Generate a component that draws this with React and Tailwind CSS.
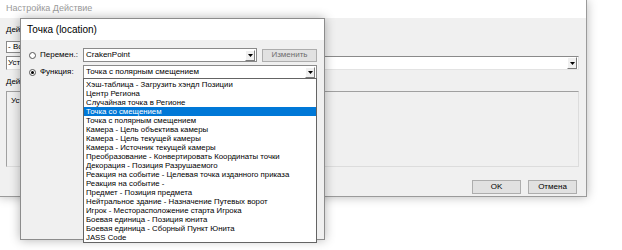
import React from "react";

const items = [
  "Хэш-таблица - Загрузить хэндл Позиции",
  "Центр Региона",
  "Случайная точка в Регионе",
  "Точка со смещением",
  "Точка с полярным смещением",
  "Камера - Цель объектива камеры",
  "Камера - Цель текущей камеры",
  "Камера - Источник текущей камеры",
  "Преобразование - Конвертировать Координаты точки",
  "Декорация - Позиция Разрушаемого",
  "Реакция на событие - Целевая точка изданного приказа",
  "Реакция на событие -",
  "Предмет - Позиция предмета",
  "Нейтральное здание - Назначение Путевых ворот",
  "Игрок - Месторасположение старта Игрока",
  "Боевая единица - Позиция юнита",
  "Боевая единица - Сборный Пункт Юнита",
  "JASS Code",
];

function Arrow() {
  return (
    <svg width="5" height="3" viewBox="0 0 5 3">
      <path d="M0 0h5L2.5 3z" fill="#000" />
    </svg>
  );
}

function DropBtn() {
  return (
    <div className="flex h-full w-[10px] items-center justify-center border border-t-white border-l-white border-r-[#7a7a7a] border-b-[#7a7a7a] bg-[#f0f0f0]">
      <Arrow />
    </div>
  );
}

function Radio({ on }) {
  return (
    <div className="flex w-[11px] items-center">
      <div className="flex h-[7px] w-[7px] items-center justify-center rounded-full border border-[#555] bg-white">
        {on && <div className="h-[3px] w-[3px] rounded-full bg-black" />}
      </div>
    </div>
  );
}

export default function App() {
  const font = { fontFamily: '"Liberation Sans", Arial, sans-serif' };
  return (
    <div className="relative h-[250px] w-[622px] overflow-hidden bg-white text-[8px] text-black" style={font}>
      {/* background window */}
      <div className="absolute left-[-1px] top-0 flex h-[197px] w-[588px] flex-col border-r border-b border-[#9a9a9a] bg-[#f0f0f0] shadow-[0_0_10px_rgba(0,0,0,0.28)]">
        <div className="flex h-[18px] items-center bg-white pl-[7px] text-[9px] text-[#9a9a9a]">Настройка Действие</div>
        <div className="flex flex-col pl-[7px] pr-[7px]">
          <div className="mt-[7px] flex h-[10px] items-center">Дей</div>
          <div className="mt-[6px] flex h-[12px] w-[220px] items-center border border-[#8a8a8a] bg-white pl-[1px]">- Все</div>
          <div className="mt-[3px] flex h-[14px] items-center justify-between border border-t-[#8a8a8a] border-l-[#8a8a8a] border-r-[#e3e3e3] border-b-[#e3e3e3] bg-white pl-[1px] pr-[1px]">
            <span>Установить</span>
            <div className="h-[12px]"><DropBtn /></div>
          </div>
          <div className="mt-[7px] flex h-[10px] items-center">Дей</div>
          <div className="mt-[4px] h-[76px] border border-t-[#a0a0a0] border-l-[#a0a0a0] border-r-[#dcdcdc] border-b-[#dcdcdc] bg-[#f0f0f0] pl-[4px] pt-[3px]">Установить</div>
          <div className="mt-[13px] flex h-[14px] justify-end gap-[7px] pr-[2px]">
            <div className="flex w-[49px] items-center justify-center border border-[#adadad] bg-[#e1e1e1]">OK</div>
            <div className="flex w-[49px] items-center justify-center border border-[#adadad] bg-[#e1e1e1]">Отмена</div>
          </div>
        </div>
      </div>

      {/* popup dialog */}
      <div className="absolute left-[20px] top-[18px] flex h-[222px] w-[305px] flex-col border border-[#8c8c8c] bg-[#f0f0f0] shadow-[0_0_10px_rgba(0,0,0,0.3)]">
        <div className="flex h-[21px] items-center bg-white pl-[6px] text-[10px]">Точка (location)</div>
        <div className="flex flex-col pl-[8px] pt-[8px]">
          <div className="flex h-[14px] items-center">
            <Radio on={false} />
            <div className="w-[43px]">Перемен.:</div>
            <div className="flex h-full w-[174px] items-center justify-between border border-[#8a8a8a] bg-white pl-[2px] pr-[1px]">
              <span>CrakenPoint</span>
              <div className="h-[11px]"><DropBtn /></div>
            </div>
            <div className="ml-[5px] flex h-[13px] w-[55px] items-center justify-center border border-[#adadad] bg-[#e1e1e1] text-[#6d6d6d]">Изменить</div>
          </div>
          <div className="mt-[3px] flex h-[14px] items-center">
            <Radio on={true} />
            <div className="w-[43px]">Функция:</div>
            <div className="flex h-full w-[234px] items-center justify-between border border-[#8a8a8a] bg-white pl-[2px] pr-[1px]">
              <span>Точка с полярным смещением</span>
              <div className="h-[11px]"><DropBtn /></div>
            </div>
          </div>
        </div>

        {/* dropdown list */}
        <div className="absolute left-[62px] top-[59px] flex w-[234px] flex-col border border-[#646464] bg-white pt-[1px] text-[7.8px]">
          {items.map((t, i) => (
            <div
              key={i}
              className={
                i === 3
                  ? "flex h-[9px] items-center whitespace-nowrap bg-[#0078d7] pl-[2px] text-white"
                  : "flex h-[9px] items-center whitespace-nowrap pl-[2px]"
              }
            >
              {t}
            </div>
          ))}
        </div>
      </div>
    </div>
  );
}
